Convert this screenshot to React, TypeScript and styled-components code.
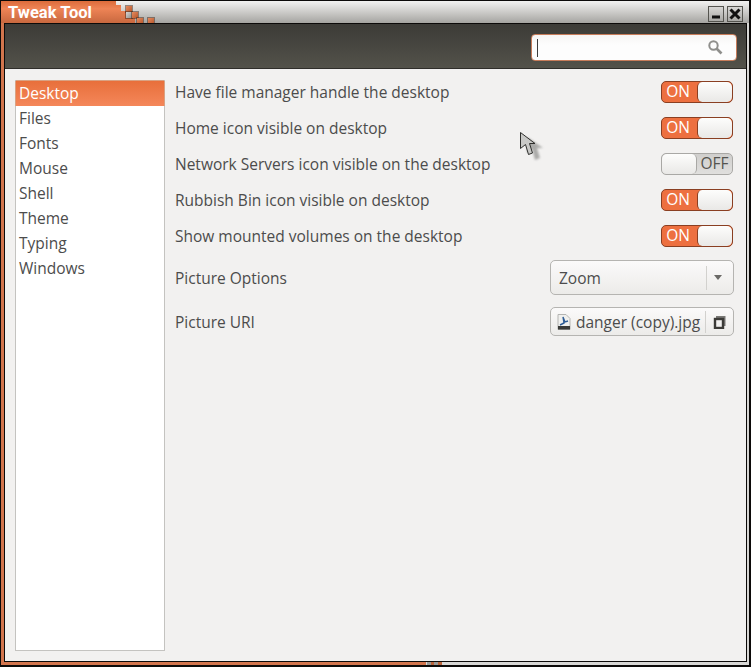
import React from 'react';
import styled, { createGlobalStyle } from 'styled-components';

const GlobalStyle = createGlobalStyle`
  html, body {
    margin: 0;
    padding: 0;
    width: 751px;
    height: 667px;
    overflow: hidden;
    background: #000;
    font-family: "Open Sans", "Noto Sans", sans-serif;
  }
`;

const Frame = styled.div`
  position: relative;
  box-sizing: border-box;
  width: 751px;
  height: 667px;
  display: flex;
  flex-direction: column;
  padding: 1px 2px 2px 1px;
  background: #0c0a09;
`;

const TitleBar = styled.div`
  position: relative;
  height: 22px;
  flex: none;
  overflow: hidden;
  display: flex;
  align-items: center;
  justify-content: space-between;
  background: linear-gradient(#f2f2f1, #dcdbd9 30%, #a5a4a1);
`;

const TitleTab = styled.div`
  width: 134px;
  height: 100%;
  box-sizing: border-box;
  padding-left: 7px;
  display: flex;
  align-items: center;
  background: linear-gradient(#dc6c3b, #ee8456 35%, #c8683f);
  clip-path: polygon(0 0, 115px 0, 115px 4px, 120px 4px, 120px 10px, 126px 10px, 126px 16px, 134px 16px, 134px 22px, 0 22px);
  font-family: "Roboto", "Open Sans", sans-serif;
  font-size: 16.5px;
  font-weight: 700;
  color: #fff;
`;

const Pixel = styled.span<{ $x: number; $y: number; $gray?: boolean }>`
  position: absolute;
  left: ${(p) => p.$x}px;
  top: ${(p) => p.$y}px;
  width: 6px;
  height: 6px;
  background: ${(p) =>
    p.$gray ? 'linear-gradient(135deg, #d6d5d3, #8f8e8b)' : 'linear-gradient(135deg, #e58a5f, #b5562a)'};
  box-shadow: 0 0 0 1px rgba(70, 40, 25, 0.5);
`;

const WindowButtons = styled.div`
  display: flex;
  gap: 3px;
  margin-right: 6px;
  padding-top: 3px;
`;

const WindowButton = styled.div`
  width: 16px;
  height: 16px;
  box-sizing: border-box;
  display: flex;
  align-items: center;
  justify-content: center;
  border: 1px solid #55544f;
  background: linear-gradient(#d8d7d5, #a9a8a5);
`;

const Body = styled.div`
  position: relative;
  flex: 1;
  display: flex;
  flex-direction: column;
  min-height: 0;
  padding: 0 2px 3px 3px;
  background: linear-gradient(90deg, #d2754d 425px, #d8d7d5 425px);
`;

const Grip = styled.span<{ $x: number; $orange?: boolean }>`
  position: absolute;
  left: ${(p) => p.$x}px;
  bottom: 0;
  width: 4px;
  height: 3px;
  background: ${(p) => (p.$orange ? '#b9643c' : '#9a9996')};
`;

const Inner = styled.div`
  flex: 1;
  min-height: 0;
  display: flex;
  flex-direction: column;
  border: 1px solid #0c0a09;
  background: #f2f1f0;
`;

const Toolbar = styled.div`
  height: 45px;
  flex: none;
  box-sizing: border-box;
  display: flex;
  align-items: center;
  justify-content: flex-end;
  padding: 3px 9px 0 0;
  background: linear-gradient(#3c3b37, #53524a);
  border-bottom: 1px solid #2f2e2a;
`;

const SearchEntry = styled.div`
  width: 206px;
  height: 27px;
  box-sizing: border-box;
  display: flex;
  align-items: center;
  justify-content: space-between;
  padding: 0 13px 0 5px;
  background: linear-gradient(#f6f5f4, #fdfdfd 40%);
  border: 1px solid #c77c5a;
  border-radius: 4px;
`;

const Caret = styled.span`
  width: 1px;
  height: 18px;
  background: #3c3c3c;
`;

const Content = styled.div`
  flex: 1;
  min-height: 0;
  display: flex;
  gap: 10px;
  padding: 11px 12px 10px 10px;
`;

const Sidebar = styled.ul`
  width: 150px;
  box-sizing: border-box;
  margin: 0;
  padding: 0;
  list-style: none;
  background: #fff;
  border: 1px solid #c4c3c0;
`;

const SidebarItem = styled.li<{ $selected?: boolean }>`
  height: 25px;
  line-height: 24px;
  padding-left: 3px;
  font-size: 15.5px;
  color: ${(p) => (p.$selected ? '#fff' : '#4c4c4c')};
  background: ${(p) => (p.$selected ? 'linear-gradient(#e86f3b, #f4875a)' : 'transparent')};
  box-shadow: ${(p) => (p.$selected ? '0 -1px 0 #d9a283, 1px 0 0 #d9a283, -1px 0 0 #d9a283' : 'none')};
`;

const Settings = styled.div`
  flex: 1;
  display: flex;
  flex-direction: column;
  gap: 12px;
`;

const Row = styled.div`
  min-height: 24px;
  display: flex;
  align-items: center;
  justify-content: space-between;
  font-size: 15.5px;
  color: #4c4c4c;
`;

const SwitchTrack = styled.div<{ $on: boolean }>`
  width: 72px;
  height: 22px;
  margin-right: 1px;
  box-sizing: border-box;
  display: flex;
  flex-direction: ${(p) => (p.$on ? 'row' : 'row-reverse')};
  align-items: stretch;
  border: 1px solid ${(p) => (p.$on ? '#8a3f22' : '#a9a8a5')};
  border-radius: 5px;
  overflow: hidden;
  background: ${(p) => (p.$on ? '#ed7040' : 'linear-gradient(#d0cfcd, #e0dfdd)')};
`;

const SwitchLabel = styled.span<{ $on: boolean }>`
  flex: 1;
  text-align: center;
  line-height: 18px;
  font-size: 15.5px;
  padding-right: ${(p) => (p.$on ? '3px' : '0')};
  color: ${(p) => (p.$on ? '#fff' : '#55544f')};
`;

const SwitchThumb = styled.span<{ $on: boolean }>`
  width: 34px;
  background: linear-gradient(#fdfdfc, #e9e8e6);
  border-left: ${(p) => (p.$on ? '1px solid #8a3f22' : 'none')};
  border-right: ${(p) => (p.$on ? 'none' : '1px solid #a9a8a5')};
  border-radius: 5px;
`;

const Combo = styled.div`
  width: 184px;
  height: 35px;
  box-sizing: border-box;
  display: flex;
  align-items: center;
  background: linear-gradient(#fbfafa, #ecebe9);
  border: 1px solid #b5b4b1;
  border-radius: 5px;
`;

const ComboText = styled.span`
  flex: 1;
  padding-left: 8px;
`;

const ComboArrow = styled.span`
  width: 22px;
  height: 24px;
  padding-right: 4px;
  display: flex;
  align-items: center;
  justify-content: center;
  border-left: 1px solid #d2d1ce;
`;

const FileButton = styled(Combo)`
  height: 29px;
`;

const FileName = styled.span`
  flex: 1;
  display: flex;
  align-items: center;
  gap: 5px;
  padding-left: 6px;
  white-space: nowrap;
`;

const FileOpen = styled.span`
  width: 27px;
  height: 22px;
  display: flex;
  align-items: center;
  justify-content: center;
  border-left: 1px solid #d2d1ce;
`;

const Cursor = styled.svg`
  position: absolute;
  left: 518px;
  top: 130px;
`;

const pages = ['Desktop', 'Files', 'Fonts', 'Mouse', 'Shell', 'Theme', 'Typing', 'Windows'];

const toggles = [
  { label: 'Have file manager handle the desktop', on: true },
  { label: 'Home icon visible on desktop', on: true },
  { label: 'Network Servers icon visible on the desktop', on: false },
  { label: 'Rubbish Bin icon visible on desktop', on: true },
  { label: 'Show mounted volumes on the desktop', on: true },
];

const Switch: React.FC<{ on: boolean }> = ({ on }) => (
  <SwitchTrack $on={on}>
    <SwitchLabel $on={on}>{on ? 'ON' : 'OFF'}</SwitchLabel>
    <SwitchThumb $on={on} />
  </SwitchTrack>
);

export default function App() {
  return (
    <Frame>
      <GlobalStyle />
      <TitleBar>
        <TitleTab>Tweak Tool</TitleTab>
        <Pixel $x={125} $y={5} />
        <Pixel $x={125} $y={11} $gray />
        <Pixel $x={131} $y={11} />
        <Pixel $x={136} $y={17} />
        <Pixel $x={147} $y={17} />
        <WindowButtons>
          <WindowButton>
            <svg width="10" height="10" viewBox="0 0 10 10">
              <rect x="1" y="6.500" width="8" height="3" fill="#111" />
            </svg>
          </WindowButton>
          <WindowButton>
            <svg width="12" height="12" viewBox="0 0 12 12">
              <path d="M1.500 1.500l9 9M10.500 1.500l-9 9" stroke="#111" strokeWidth="3" />
            </svg>
          </WindowButton>
        </WindowButtons>
      </TitleBar>
      <Body>
        <Inner>
          <Toolbar>
            <SearchEntry>
              <Caret />
              <svg width="15" height="15" viewBox="0 0 15 15">
                <circle cx="5.500" cy="5.500" r="4.200" fill="none" stroke="#8f8f8c" strokeWidth="2" />
                <path d="M8.500 8.500l5 5" stroke="#8f8f8c" strokeWidth="2.600" />
              </svg>
            </SearchEntry>
          </Toolbar>
          <Content>
            <Sidebar>
              {pages.map((page, i) => (
                <SidebarItem key={page} $selected={i === 0}>
                  {page}
                </SidebarItem>
              ))}
            </Sidebar>
            <Settings>
              {toggles.map((t) => (
                <Row key={t.label}>
                  {t.label}
                  <Switch on={t.on} />
                </Row>
              ))}
              <Row>
                Picture Options
                <Combo>
                  <ComboText>Zoom</ComboText>
                  <ComboArrow>
                    <svg width="8" height="5" viewBox="0 0 8 5">
                      <path d="M0 0h8L4 5z" fill="#6a6966" />
                    </svg>
                  </ComboArrow>
                </Combo>
              </Row>
              <Row>
                Picture URI
                <FileButton>
                  <FileName>
                    <svg width="14" height="16" viewBox="0 0 14 16">
                      <path d="M1 .5h8l4 4v11H1z" fill="#f0f0ee" stroke="#b4b4b2" />
                      <path d="M3 11l4-2-1-6 2 5 3-1" fill="none" stroke="#2f5d96" strokeWidth="1.400" />
                      <rect x="1" y="12" width="12" height="3.500" fill="#3a3a38" />
                    </svg>
                    danger (copy).jpg
                  </FileName>
                  <FileOpen>
                    <svg width="14" height="14" viewBox="0 0 14 14">
                      <path d="M3 1h9.500v10h-2V3H3z" fill="#7a7976" />
                      <rect x="2" y="4" width="8" height="9" fill="none" stroke="#3c3b38" strokeWidth="2.400" />
                    </svg>
                  </FileOpen>
                </FileButton>
              </Row>
            </Settings>
          </Content>
        </Inner>
        <Grip $x={426} />
        <Grip $x={430} $orange />
        <Grip $x={433} />
        <Grip $x={437} $orange />
      </Body>
      <Cursor width="30" height="36" viewBox="0 0 30 36">
        <defs>
          <filter id="cursor-blur">
            <feGaussianBlur stdDeviation="1.300" />
          </filter>
        </defs>
        <path d="M9 7v16l5-4 3 11 5-2-3-10h6z" fill="#9a9a98" opacity="0.8" filter="url(#cursor-blur)" />
        <path d="M2.500 2.500v16l5-4 3 10 4-1.500-3-9.500h5.500z" fill="#c9c9c7" stroke="#2e2e2c" strokeWidth="1" />
      </Cursor>
    </Frame>
  );
}
